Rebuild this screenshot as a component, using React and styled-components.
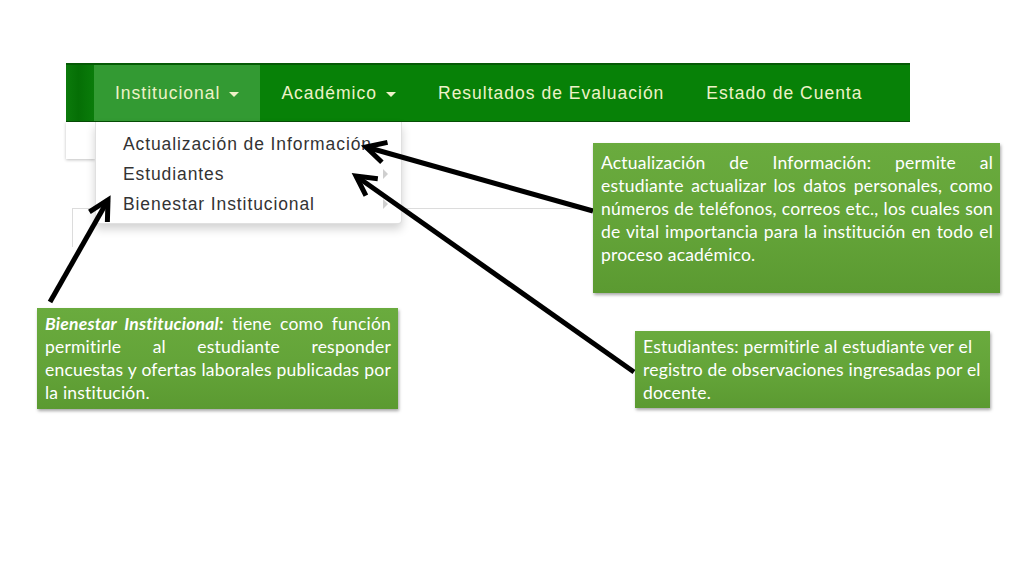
import React from "react";
import styled, { createGlobalStyle } from "styled-components";

const GlobalStyle = createGlobalStyle`
  html, body {
    margin: 0;
    padding: 0;
    background: #fff;
  }
`;

const Slide = styled.div`
  position: relative;
  width: 1024px;
  height: 576px;
  box-sizing: border-box;
  padding: 63px 0 0 66px;
  overflow: hidden;
  background: #fff;
  font-family: "Liberation Sans", Arial, sans-serif;
`;

const Shot = styled.div`
  position: relative;
  width: 844px;
`;

const NavBar = styled.nav`
  display: flex;
  align-items: stretch;
  height: 59px;
  box-sizing: border-box;
  background: #078107;
  border-top: 2px solid #055a05;
  border-bottom: 1px solid #064e06;
`;

const NavEdge = styled.div`
  width: 28px;
  background: linear-gradient(90deg, #0b7a0b, #056f05 45%, #0a7c0a);
`;

const NavItem = styled.div`
  display: flex;
  align-items: center;
  gap: 9px;
  padding: 0 21px;
  font-size: 17.5px;
  letter-spacing: 1px;
  color: #eef2c8;
  background: ${({ $active }) => ($active ? "#339a33" : "transparent")};
`;

const Caret = styled.span`
  width: 0;
  height: 0;
  border-top: 5px solid #eef2c8;
  border-left: 5px solid transparent;
  border-right: 5px solid transparent;
  margin-top: 2px;
`;

const Stub = styled.div`
  width: 29px;
  height: 37px;
  background: #fff;
  box-shadow: 0 1px 3px rgba(0, 0, 0, 0.25);
`;

const Panel = styled.div`
  margin: 49px 0 0 6px;
  width: 520px;
  height: 38px;
  border-top: 1px solid #dcdcdc;
  border-left: 1px solid #dcdcdc;
`;

const Dropdown = styled.ul`
  position: absolute;
  top: 59px;
  left: 29px;
  width: 307px;
  height: 102px;
  box-sizing: border-box;
  margin: 0;
  padding: 7px 0 5px;
  list-style: none;
  background: #fff;
  border: 1px solid rgba(0, 0, 0, 0.12);
  border-top: none;
  border-radius: 0 0 4px 4px;
  box-shadow: 0 5px 10px rgba(0, 0, 0, 0.18);
`;

const MenuItem = styled.li`
  position: relative;
  height: 30px;
  line-height: 30px;
  padding-left: 27px;
  font-size: 17.5px;
  letter-spacing: 0.9px;
  color: #333;
  white-space: nowrap;
`;

const SubArrow = styled.span`
  position: absolute;
  right: 13px;
  top: 10px;
  width: 0;
  height: 0;
  border-left: 5px solid #cfcfcf;
  border-top: 5px solid transparent;
  border-bottom: 5px solid transparent;
`;

const Overlay = styled.svg`
  position: absolute;
  left: 0;
  top: 0;
  pointer-events: none;
`;

const Callout = styled.div`
  position: absolute;
  left: ${({ $x }) => $x}px;
  top: ${({ $y }) => $y}px;
  width: ${({ $w }) => $w}px;
  height: ${({ $h }) => $h}px;
  box-sizing: border-box;
  padding: ${({ $pt }) => $pt}px 7px 0 8px;
  background: linear-gradient(180deg, #6aab3e 0%, #63a338 60%, #5b9a31 100%);
  box-shadow: 1px 2px 3px rgba(0, 0, 0, 0.35);
  color: #fff;
  font-family: Lato, "Open Sans", sans-serif;
  font-size: 17.5px;
  letter-spacing: 0.2px;
  line-height: 23px;
`;

const Line = styled.span`
  display: block;
  white-space: nowrap;
  text-align: ${({ $justify }) => ($justify ? "justify" : "left")};
  text-align-last: ${({ $justify }) => ($justify ? "justify" : "left")};
`;

const Strong = styled.b`
  font-style: italic;
  font-weight: 700;
`;

function Arrow({ from, to }) {
  const [fx, fy] = from;
  const [tx, ty] = to;
  const a = Math.atan2(fy - ty, fx - tx);
  const len = 22;
  const spread = (28 * Math.PI) / 180;
  const p1 = [tx + len * Math.cos(a + spread), ty + len * Math.sin(a + spread)];
  const p2 = [tx + len * Math.cos(a - spread), ty + len * Math.sin(a - spread)];
  return (
    <g stroke="#000" strokeWidth="5" fill="none" strokeLinejoin="miter">
      <line x1={fx} y1={fy} x2={tx} y2={ty} />
      <polyline points={`${p1.join(",")} ${tx},${ty} ${p2.join(",")}`} />
    </g>
  );
}

export default function App() {
  return (
    <Slide>
      <GlobalStyle />
      <Shot>
        <NavBar>
          <NavEdge />
          <NavItem $active>
            Institucional <Caret />
          </NavItem>
          <NavItem>
            Académico <Caret />
          </NavItem>
          <NavItem>Resultados de Evaluación</NavItem>
          <NavItem>Estado de Cuenta</NavItem>
        </NavBar>
        <Stub />
        <Panel />
        <Dropdown>
          <MenuItem>Actualización de Información</MenuItem>
          <MenuItem>
            Estudiantes
            <SubArrow />
          </MenuItem>
          <MenuItem>
            Bienestar Institucional
            <SubArrow />
          </MenuItem>
        </Dropdown>
      </Shot>

      <Overlay width="1024" height="576" viewBox="0 0 1024 576">
        <Arrow from={[593, 211]} to={[366, 147]} />
        <Arrow from={[634, 372]} to={[356, 176]} />
        <Arrow from={[50, 302]} to={[108, 200]} />
      </Overlay>

      <Callout $x={593} $y={143} $w={407} $h={150} $pt={8}>
        <Line $justify>Actualización de Información: permite al</Line>
        <Line $justify>estudiante actualizar los datos personales, como</Line>
        <Line $justify>números de teléfonos, correos etc., los cuales son</Line>
        <Line $justify>de vital importancia para la institución en todo el</Line>
        <Line>proceso académico.</Line>
      </Callout>

      <Callout $x={37} $y={308} $w={361} $h={101} $pt={4}>
        <Line $justify>
          <Strong>Bienestar Institucional:</Strong> tiene como función
        </Line>
        <Line $justify>permitirle al estudiante responder</Line>
        <Line $justify>encuestas y ofertas laborales publicadas por</Line>
        <Line>la institución.</Line>
      </Callout>

      <Callout $x={635} $y={331} $w={355} $h={77} $pt={4}>
        <Line>Estudiantes: permitirle al estudiante ver el</Line>
        <Line>registro de observaciones ingresadas por el</Line>
        <Line>docente.</Line>
      </Callout>
    </Slide>
  );
}
